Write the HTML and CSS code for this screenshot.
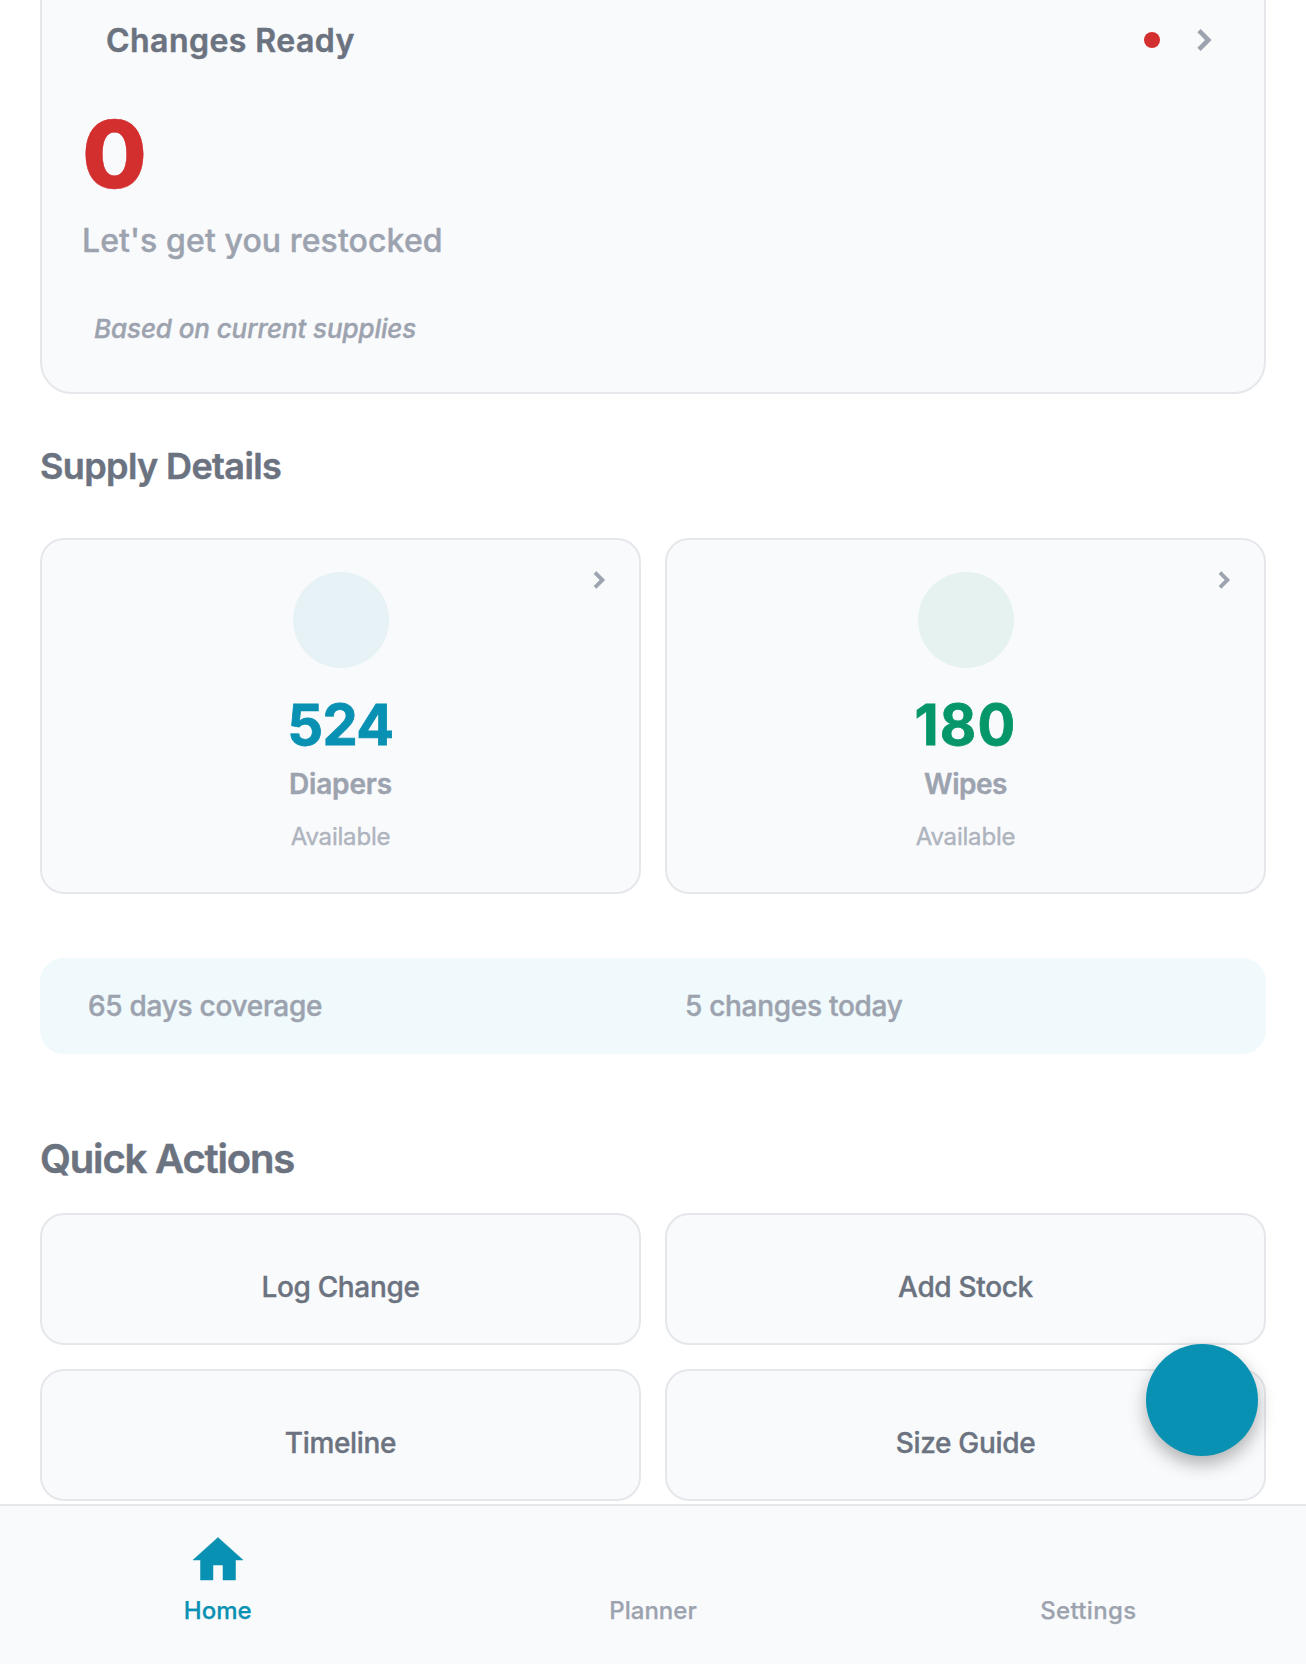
FILE: index.html
```
<!DOCTYPE html>
<html lang="en">
<head>
<meta charset="utf-8">
<title>Home</title>
<link rel="stylesheet" href="styles.css">
</head>
<body>
<main class="content">
  <section class="hero">
    <div class="hero-head">
      <h2 class="hero-title">Changes Ready</h2>
      <span class="dot"></span>
      <svg class="chevron-lg" viewBox="0 0 24 24"><path d="M10 6 8.59 7.41 13.17 12l-4.58 4.59L10 18l6-6z"/></svg>
    </div>
    <div class="hero-value">0</div>
    <div class="hero-message">Let's get you restocked</div>
    <div class="hero-note">Based on current supplies</div>
  </section>

  <h2 class="section-title">Supply Details</h2>
  <section class="supplies">
    <article class="supply">
      <svg class="chevron" viewBox="0 0 24 24"><path d="M10 6 8.59 7.41 13.17 12l-4.58 4.59L10 18l6-6z"/></svg>
      <span class="badge badge-teal"></span>
      <div class="count count-teal">524</div>
      <div class="name">Diapers</div>
      <div class="status">Available</div>
    </article>
    <article class="supply">
      <svg class="chevron" viewBox="0 0 24 24"><path d="M10 6 8.59 7.41 13.17 12l-4.58 4.59L10 18l6-6z"/></svg>
      <span class="badge badge-green"></span>
      <div class="count count-green">180</div>
      <div class="name name-wipes">Wipes</div>
      <div class="status">Available</div>
    </article>
  </section>

  <section class="summary">
    <span>65 days coverage</span>
    <span>5 changes today</span>
  </section>

  <h2 class="actions-title">Quick Actions</h2>
  <section class="actions">
    <button class="action">Log Change</button>
    <button class="action">Add Stock</button>
    <button class="action">Timeline</button>
    <button class="action">Size Guide</button>
  </section>
</main>

<button class="fab" aria-label="Add"></button>

<nav class="tabs">
  <a class="tab tab-active">
    <svg class="tab-icon" viewBox="0 0 24 24"><path d="M10 20v-6h4v6h5v-8h3L12 3 2 12h3v8z"/></svg>
    <span>Home</span>
  </a>
  <a class="tab"><span class="tab-icon"></span><span>Planner</span></a>
  <a class="tab"><span class="tab-icon"></span><span class="tab-wide">Settings</span></a>
</nav>
</body>
</html>
```
FILE: styles.css
```
* { box-sizing: border-box; }

body {
  margin: 0;
  height: 1664px;
  display: flex;
  flex-direction: column;
  overflow: hidden;
  background: #fff;
  font-family: Inter, "Liberation Sans", sans-serif;
  color: #6b7280;
  -webkit-text-stroke: 0.4px currentColor;
}

h2 { margin: 0; font-weight: 600; -webkit-text-stroke: 0.5px currentColor; }
svg { display: block; fill: currentColor; }

.content {
  flex: none;
  height: 1504px;
  padding: 0 40px;
  overflow: hidden;
}

.hero {
  height: 422px;
  margin-top: -28px;
  padding: 46px 40px 0;
  border: 2px solid #e5e7eb;
  border-radius: 32px;
  background: #f9fafc;
}

.hero-head {
  display: flex;
  align-items: center;
  height: 40px;
  gap: 24px;
}

.hero-title {
  flex: 1;
  padding: 1px 0 0 24px;
  font-size: 32px;
  line-height: 40px;
  letter-spacing: 0.45px;
}

.dot {
  width: 16px;
  height: 16px;
  border-radius: 50%;
  background: #d32f2f;
}

.chevron-lg,
.chevron { color: #9ca3af; stroke: currentColor; stroke-width: 0.8; }

.chevron-lg { width: 40px; height: 40px; }

.hero-value {
  margin-top: 36px;
  font-size: 94px;
  font-weight: 800;
  line-height: 116px;
  color: #d32f2f;
}

.hero-message {
  margin-top: 9px;
  font-size: 32px;
  font-weight: 500;
  line-height: 39px;
  letter-spacing: 0.1px;
  color: #9ca3af;
}

.hero-note {
  margin-top: 53px;
  padding-left: 12px;
  font-size: 26px;
  font-style: italic;
  font-weight: 500;
  line-height: 31px;
  letter-spacing: -0.1px;
  color: #9ca3af;
}

.section-title {
  margin: 50px 0;
  font-size: 36px;
  line-height: 44px;
  letter-spacing: -0.62px;
}

.supplies {
  display: grid;
  grid-template-columns: 1fr 1fr;
  gap: 24px;
}

.supply {
  position: relative;
  display: flex;
  flex-direction: column;
  align-items: center;
  height: 356px;
  padding-top: 32px;
  border: 2px solid #e5e7eb;
  border-radius: 24px;
  background: #f9fafc;
}

.chevron {
  position: absolute;
  top: 24px;
  right: 24px;
  width: 32px;
  height: 32px;
}

.badge { width: 96px; height: 96px; border-radius: 50%; }
.badge-teal { background: #e6f2f6; }
.badge-green { background: #e5f2ef; }

.count {
  margin-top: 24px;
  font-size: 56px;
  font-weight: 700;
  line-height: 66px;
  -webkit-text-stroke: 0.8px currentColor;
}
.count-teal { color: #0891b2; letter-spacing: -0.6px; }
.count-green { color: #059669; letter-spacing: 1.2px; }

.name {
  margin-top: 8px;
  font-size: 28px;
  font-weight: 600;
  line-height: 36px;
  letter-spacing: -0.15px;
  color: #9ca3af;
}
.name-wipes { letter-spacing: -0.5px; }

.status {
  margin-top: 20px;
  font-size: 24px;
  line-height: 29px;
  letter-spacing: -0.2px;
  color: #9ca3af;
  opacity: 0.8;
}

.summary {
  display: grid;
  grid-template-columns: 597px 1fr;
  align-items: center;
  height: 96px;
  margin-top: 64px;
  padding-left: 48px;
  border-radius: 24px;
  background: #f0f9fb;
  font-size: 28px;
  font-weight: 500;
  line-height: 34px;
  letter-spacing: -0.29px;
  color: #9ca3af;
}

.actions-title {
  margin: 80px 0 30px;
  font-size: 40px;
  line-height: 49px;
  letter-spacing: -1.16px;
}

.actions {
  display: grid;
  grid-template-columns: 1fr 1fr;
  gap: 24px;
}

.action {
  height: 132px;
  padding: 16px 0 0;
  border: 2px solid #e5e7eb;
  border-radius: 24px;
  background: #f9fafc;
  font: 500 28px/34px Inter, "Liberation Sans", sans-serif;
  letter-spacing: -0.33px;
  color: #6b7280;
  -webkit-text-stroke: 0.35px currentColor;
}

.fab {
  position: absolute;
  right: 48px;
  top: 1344px;
  width: 112px;
  height: 112px;
  padding: 0;
  border: 0;
  border-radius: 50%;
  background: #0891b2;
  box-shadow: 0 8px 18px rgba(0, 0, 0, 0.3);
}

.tabs {
  flex: none;
  display: grid;
  grid-template-columns: repeat(3, 1fr);
  height: 160px;
  border-top: 2px solid #e5e7eb;
  background: #f9fafc;
}

.tab {
  display: flex;
  flex-direction: column;
  align-items: center;
  gap: 6px;
  padding-top: 24px;
  font-size: 24px;
  font-weight: 500;
  line-height: 29px;
  color: #9ca3af;
  -webkit-text-stroke: 0.25px currentColor;
}
.tab-active { color: #0891b2; }
.tab-icon { width: 60px; height: 60px; }
.tab-active .tab-icon { stroke: currentColor; stroke-width: 0.2; }
.tab-wide { letter-spacing: 0.35px; }
```
